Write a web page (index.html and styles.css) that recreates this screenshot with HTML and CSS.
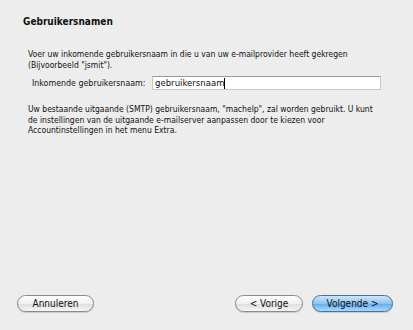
FILE: index.html
```html
<!DOCTYPE html>
<html>
<head>
<meta charset="utf-8">
<link rel="stylesheet" href="styles.css">
</head>
<body>
<div class="window">
  <h1 class="title">Gebruikersnamen</h1>
  <p class="text intro">Voer uw inkomende gebruikersnaam in die u van uw e-mailprovider heeft gekregen<br>(Bijvoorbeeld "jsmit").</p>
  <div class="field">
    <label class="label">Inkomende gebruikersnaam:</label>
    <div class="input">gebruikersnaam<span class="caret"></span></div>
  </div>
  <p class="text info">Uw bestaande uitgaande (SMTP) gebruikersnaam, "machelp", zal worden gebruikt. U kunt<br>de instellingen van de uitgaande e-mailserver aanpassen door te kiezen voor<br>Accountinstellingen in het menu Extra.</p>
  <div class="spacer"></div>
  <div class="buttons">
    <button class="btn btn-cancel">Annuleren</button>
    <div class="nav">
      <button class="btn btn-prev">&lt; Vorige</button>
      <button class="btn btn-next">Volgende &gt;</button>
    </div>
  </div>
</div>
</body>
</html>
```
FILE: styles.css
```css
html, body {
  margin: 0;
  padding: 0;
  background: #ededed;
}
.window {
  width: 413px;
  height: 330px;
  box-sizing: border-box;
  padding: 15px 20px 18px 23px;
  display: flex;
  flex-direction: column;
  font-family: "DejaVu Sans Condensed", "DejaVu Sans", sans-serif;
  color: #111;
}
.title {
  margin: 0;
  font-size: 10px;
  font-weight: bold;
  line-height: 14px;
}
.text {
  margin: 0;
  font-size: 8.5px;
  line-height: 10.5px;
  white-space: nowrap;
}
.intro {
  margin-top: 20px;
  padding-left: 5px;
}
.field {
  display: flex;
  align-items: center;
  margin-top: 6px;
  padding-left: 9px;
  gap: 4px;
}
.label {
  font-size: 8.8px;
  white-space: nowrap;
  width: 116px;
}
.input {
  width: 229px;
  height: 14px;
  box-sizing: border-box;
  background: #fff;
  border: 1px solid #c8c8c8;
  border-top: 1px solid #9a9a9a;
  font-size: 9.5px;
  line-height: 12px;
  padding-left: 2px;
  display: flex;
  align-items: center;
}
.caret {
  display: inline-block;
  width: 1px;
  height: 11px;
  background: #000;
}
.info {
  margin-top: 14px;
  padding-left: 5px;
}
.spacer {
  flex: 1;
}
.buttons {
  display: flex;
  justify-content: space-between;
  align-items: center;
  margin-left: -6px;
}
.nav {
  display: flex;
  gap: 9px;
}
.btn {
  height: 17px;
  border-radius: 8.5px;
  border: 1px solid #8a8a8a;
  background: linear-gradient(#ffffff, #f0f0f0 50%, #dcdcdc 51%, #f6f6f6);
  font-family: "DejaVu Sans Condensed", "DejaVu Sans", sans-serif;
  font-size: 10px;
  color: #111;
  padding: 0;
  line-height: 15px;
  box-shadow: 0 1px 1px rgba(0,0,0,0.15);
}
.btn-cancel { width: 77px; }
.btn-prev { width: 68px; }
.btn-next {
  width: 81px;
  border-color: #4a6fa0;
  background: linear-gradient(#cfe6fb, #8dc3f2 50%, #62a8ea 51%, #a8dafc);
}
```
